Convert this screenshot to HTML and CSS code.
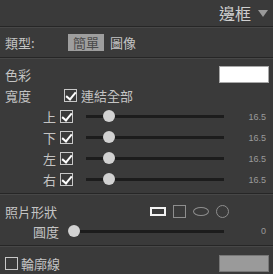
FILE: index.html
```html
<!DOCTYPE html>
<html lang="zh-Hant">
<head>
  <meta charset="UTF-8" />
  <title>邊框</title>
  <link rel="stylesheet" href="styles.css">
</head>
<body>
  <div class="panel">
    <div class="header">
      <span class="title">邊框</span>
      <span class="caret"></span>
    </div>

    <div class="section type-row">
      <span class="label">類型:</span>
      <span class="tab active">簡單</span>
      <span class="tab">圖像</span>
    </div>

    <div class="section sizes">
      <div class="row color-row">
        <span class="label">色彩</span>
        <span class="swatch white"></span>
      </div>
      <div class="row link-row">
        <span class="label">寬度</span>
        <span class="check on"></span>
        <span class="link-text">連結全部</span>
      </div>

      <div class="slider-row">
        <span class="side">上</span>
        <span class="check on"></span>
        <div class="track"><span class="knob" style="left: 23px"></span></div>
        <span class="value">16.5</span>
      </div>
      <div class="slider-row">
        <span class="side">下</span>
        <span class="check on"></span>
        <div class="track"><span class="knob" style="left: 23px"></span></div>
        <span class="value">16.5</span>
      </div>
      <div class="slider-row">
        <span class="side">左</span>
        <span class="check on"></span>
        <div class="track"><span class="knob" style="left: 23px"></span></div>
        <span class="value">16.5</span>
      </div>
      <div class="slider-row">
        <span class="side">右</span>
        <span class="check on"></span>
        <div class="track"><span class="knob" style="left: 23px"></span></div>
        <span class="value">16.5</span>
      </div>
    </div>

    <div class="section shape">
      <div class="row shape-row">
        <span class="label">照片形狀</span>
        <div class="shapes">
          <span class="shape-rect"></span>
          <span class="shape-square"></span>
          <span class="shape-ellipse"></span>
          <span class="shape-circle"></span>
        </div>
      </div>
      <div class="slider-row round-row">
        <span class="side">圓度</span>
        <div class="track"><span class="knob" style="left: 6px"></span></div>
        <span class="value">0</span>
      </div>
    </div>

    <div class="section outline-row">
      <span class="check"></span>
      <span class="label">輪廓線</span>
      <span class="swatch gray"></span>
    </div>
  </div>
</body>
</html>
```

FILE: styles.css
```css
* {
  box-sizing: border-box;
}

body {
  margin: 0;
  background: #3a3a3a;
  font-family: "Noto Sans CJK TC", "Noto Sans", sans-serif;
  color: #c4c4c4;
  font-size: 13px;
}

.panel {
  width: 273px;
  height: 274px;
  overflow: hidden;
}

.header {
  height: 27px;
  display: flex;
  justify-content: flex-end;
  align-items: center;
  padding-right: 5px;
  border-bottom: 1px solid #262626;
}

.title {
  font-size: 16px;
  color: #cfcfcf;
  line-height: 1;
  margin-right: 7px;
}

.caret {
  width: 0;
  height: 0;
  border-left: 5px solid transparent;
  border-right: 5px solid transparent;
  border-top: 7px solid #9a9a9a;
}

.section {
  border-top: 1px solid #474747;
  border-bottom: 1px solid #262626;
}

.label {
  line-height: 1;
}

.type-row {
  height: 31px;
  display: flex;
  align-items: center;
  padding-left: 5px;
}

.type-row .label {
  width: 63px;
}

.tab {
  padding: 2px 5px;
  line-height: 13px;
  margin-right: 1px;
}

.tab.active {
  background: #9e9e9e;
  color: #4a4a4a;
}

.sizes {
  padding: 4px 0 3px;
}

.row {
  display: flex;
  align-items: center;
  padding-left: 5px;
}

.color-row {
  height: 22px;
  justify-content: space-between;
  padding-right: 4px;
}

.link-row {
  height: 21px;
}

.link-row .label {
  width: 59px;
}

.link-text {
  margin-left: 4px;
}

.swatch {
  width: 50px;
  height: 17px;
  border: 1px solid #a8a8a8;
}

.swatch.white {
  background: #fff;
}

.swatch.gray {
  background: #9a9a9a;
  border-color: #777;
}

.check {
  width: 13px;
  height: 13px;
  border: 1px solid #c8c8c8;
  position: relative;
  flex: none;
}

.check.on::after {
  content: "";
  position: absolute;
  left: 3px;
  top: 0;
  width: 4px;
  height: 8px;
  border-right: 2px solid #fff;
  border-bottom: 2px solid #fff;
  transform: rotate(40deg);
}

.slider-row {
  height: 21px;
  display: flex;
  align-items: center;
}

.side {
  width: 60px;
  text-align: right;
  padding-right: 4px;
  line-height: 1;
}

.track {
  position: relative;
  margin-left: 13px;
  width: 138px;
  height: 3px;
  background: #1c1c1c;
}

.knob {
  position: absolute;
  top: -5px;
  margin-left: -6px;
  width: 12px;
  height: 12px;
  border-radius: 50%;
  background: #d2d2d2;
}

.value {
  flex: 1;
  text-align: right;
  padding-right: 7px;
  font-family: "Liberation Sans", sans-serif;
  font-size: 9px;
  color: #9a9a9a;
}

.shape {
  padding: 5px 0;
}

.shape-row {
  height: 22px;
}

.shape-row .label {
  width: 145px;
}

.shapes {
  display: flex;
  align-items: center;
  gap: 7px;
}

.shape-rect {
  width: 16px;
  height: 9px;
  border: 2px solid #f2f2f2;
}

.shape-square {
  width: 13px;
  height: 13px;
  border: 1px solid #8e8e8e;
}

.shape-ellipse {
  width: 16px;
  height: 9px;
  border: 1px solid #8e8e8e;
  border-radius: 50%;
}

.shape-circle {
  width: 13px;
  height: 13px;
  border: 1px solid #8e8e8e;
  border-radius: 50%;
}

.round-row {
  height: 18px;
}

.round-row .side {
  width: 63px;
}

.round-row .track {
  margin-left: 5px;
  width: 156px;
}

.outline-row {
  height: 28px;
  display: flex;
  align-items: center;
  padding: 5px 4px 0 5px;
  border-bottom: none;
}

.outline-row .label {
  flex: 1;
  margin-left: 3px;
}
```
